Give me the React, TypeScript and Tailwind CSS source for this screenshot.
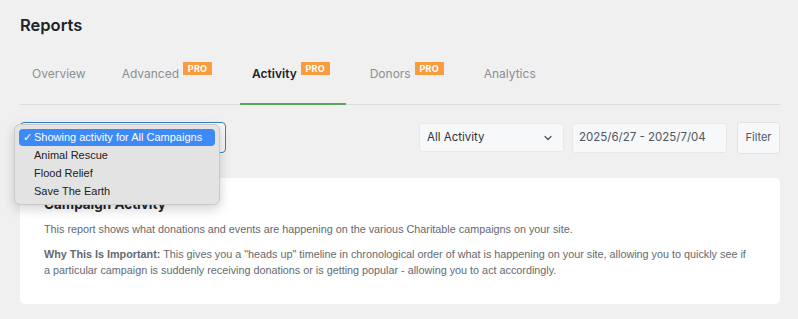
const tabs = [
  { label: "Overview", pro: false, active: false },
  { label: "Advanced", pro: true, active: false },
  { label: "Activity", pro: true, active: true },
  { label: "Donors", pro: true, active: false },
  { label: "Analytics", pro: false, active: false },
];

const campaigns = ["Animal Rescue", "Flood Relief", "Save The Earth"];

function ProBadge() {
  return (
    <span className="ml-[4px] mr-[4px] -mt-[12px] inline-flex h-[13px] w-[29px] items-center justify-center bg-[#f89c3e] text-[9px] font-bold leading-none tracking-[0.3px] text-white">
      PRO
    </span>
  );
}

function Tabs() {
  return (
    <div className="mt-[7px] flex gap-3 border-b border-[#dcdcde]">
      {tabs.map((tab) => (
        <div
          key={tab.label}
          className={
            tab.active
              ? "-mb-px flex items-center border-b-2 border-[#5aa65a] pl-3 pr-3 pt-[20px] pb-[19px]"
              : "flex items-center pl-3 pr-3 pt-[20px] pb-[20px]"
          }
        >
          <span
            className={
              tab.active
                ? "text-[12px] font-semibold leading-[20px] text-[#1d2327]"
                : "text-[12px] leading-[20px] text-[#8c8f94]"
            }
          >
            {tab.label}
          </span>
          {tab.pro && <ProBadge />}
        </div>
      ))}
    </div>
  );
}

function CampaignMenu() {
  return (
    <div className="absolute left-[-7px] top-[1px] z-10 w-[206px] rounded-[6px] border border-[#c9c9c9] bg-[#e3e3e3] p-1 shadow-[0_4px_12px_rgba(0,0,0,0.18)] font-['Liberation_Sans',sans-serif] text-[11px] text-[#222] whitespace-nowrap">
      <div className="flex h-[17px] items-center rounded-[4px] bg-[#3d89f6] pl-[4px] text-white">
        <span className="w-[11px] text-[11px]">✓</span>
        <span>Showing activity for All Campaigns</span>
      </div>
      {campaigns.map((c) => (
        <div key={c} className="flex h-[18px] items-center pl-[15px]">
          {c}
        </div>
      ))}
    </div>
  );
}

function Controls() {
  return (
    <div className="mt-4 flex h-[33px] items-center">
      <div className="relative h-[31px] w-[206px] rounded-[4px] border border-[#3582c4] bg-[#f6f7f7]">
        <CampaignMenu />
      </div>
      <div className="ml-auto flex items-center">
        <div className="flex h-[29px] w-[145px] items-center justify-between rounded-[3px] border border-[#e8e8e8] bg-[#f7f8f9] pl-[7px] pr-[10px] text-[11.5px] text-[#2c3338]">
          <span>All Activity</span>
          <svg width="10" height="10" viewBox="0 0 10 10" fill="none">
            <path d="M2 3.5 5 6.5 8 3.5" stroke="#50575e" strokeWidth="1.3" strokeLinecap="round" strokeLinejoin="round" />
          </svg>
        </div>
        <div className="ml-2 flex h-[30px] w-[155px] items-center rounded-[3px] border border-[#e8e8e8] bg-[#f7f8f9] pl-[6px] text-[11.5px] text-[#50575e]">
          2025/6/27 - 2025/7/04
        </div>
        <button className="ml-[10px] flex h-[32px] w-[43px] items-center justify-center rounded-[3px] border border-[#e2e2e2] bg-[#f7f8f9] text-[11px] text-[#50575e]">
          Filter
        </button>
      </div>
    </div>
  );
}

function InfoCard() {
  return (
    <div className="mt-6 rounded-[5px] bg-white px-6 pt-4 pb-[26px]">
      <h2 className="text-[13.5px] font-bold leading-[20px] text-[#1d2327]">Campaign Activity</h2>
      <div className="font-['Liberation_Sans',sans-serif] text-[10.8px] leading-[16px] text-[#646970]">
        <p className="mt-[7px]">
          This report shows what donations and events are happening on the various Charitable campaigns on your site.
        </p>
        <p className="mt-[9px] mr-[8px]">
          <strong className="font-bold">Why This Is Important:</strong> This gives you a "heads up" timeline in
          chronological order of what is happening on your site, allowing you to quickly see if a particular campaign is
          suddenly receiving donations or is getting popular - allowing you to act accordingly.
        </p>
      </div>
    </div>
  );
}

export default function App() {
  return (
    <div className="min-h-screen bg-[#f0f0f1] pl-5 pr-[18px] pt-[13px] font-['Inter',sans-serif]">
      <h1 className="text-[16.5px] font-semibold leading-[24px] text-[#1d2327]">Reports</h1>
      <Tabs />
      <Controls />
      <InfoCard />
    </div>
  );
}
